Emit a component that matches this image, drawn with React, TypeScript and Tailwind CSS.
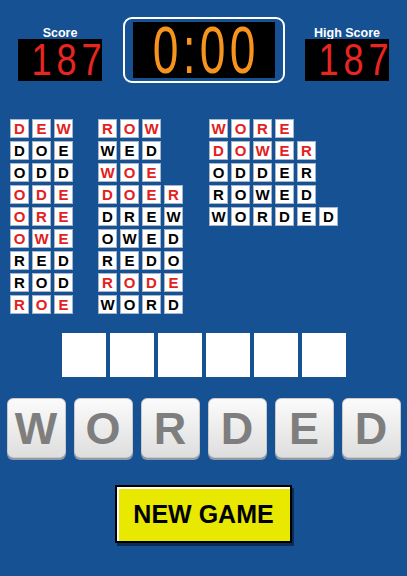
import React from 'react';

const font = { fontFamily: '"Liberation Sans", Arial, sans-serif' };

type Word = { text: string; red: boolean };

const col1: Word[] = [
  { text: 'DEW', red: true },
  { text: 'DOE', red: false },
  { text: 'ODD', red: false },
  { text: 'ODE', red: true },
  { text: 'ORE', red: true },
  { text: 'OWE', red: true },
  { text: 'RED', red: false },
  { text: 'ROD', red: false },
  { text: 'ROE', red: true },
];

const col2: Word[] = [
  { text: 'ROW', red: true },
  { text: 'WED', red: false },
  { text: 'WOE', red: true },
  { text: 'DOER', red: true },
  { text: 'DREW', red: false },
  { text: 'OWED', red: false },
  { text: 'REDO', red: false },
  { text: 'RODE', red: true },
  { text: 'WORD', red: false },
];

const col3: Word[] = [
  { text: 'WORE', red: true },
  { text: 'DOWER', red: true },
  { text: 'ODDER', red: false },
  { text: 'ROWED', red: false },
  { text: 'WORDED', red: false },
];

function WordColumn({ words, className }: { words: Word[]; className?: string }) {
  return (
    <div className={`flex flex-col gap-[3px] ${className ?? ''}`}>
      {words.map((w) => (
        <div key={w.text} className="flex gap-[3px]">
          {w.text.split('').map((ch, i) => (
            <div
              key={i}
              className={`w-[19px] h-[19px] bg-white border border-[#a7b6cb] flex items-center justify-center text-[15px] font-bold leading-none ${
                w.red ? 'text-[#e3211c]' : 'text-black'
              }`}
            >
              {ch}
            </div>
          ))}
        </div>
      ))}
    </div>
  );
}

function ScoreBox({ label, value }: { label: string; value: string }) {
  return (
    <div className="flex flex-col items-center w-[84px] pt-[10px]">
      <div className="text-white font-bold text-[12.5px] leading-[12px]">{label}</div>
      <div className="w-[84px] h-[42px] bg-black flex items-center justify-end pr-[2px]">
        <span className="text-[#e8261f] text-[44px] leading-[40px] tracking-[6px] scale-x-[0.82] origin-right inline-block -mr-[6px]">
          {value}
        </span>
      </div>
    </div>
  );
}

export default function App() {
  const slots = [0, 1, 2, 3, 4, 5];
  const keys = ['W', 'O', 'R', 'D', 'E', 'D'];

  return (
    <div className="w-[407px] h-[576px] bg-[#165193] flex flex-col overflow-hidden" style={font}>
      {/* header */}
      <div className="flex justify-between px-[18px] pt-[17px]">
        <ScoreBox label="Score" value="187" />
        <div className="w-[162px] h-[66px] border-2 border-white rounded-[9px] px-[8px] py-[3px]">
          <div className="w-full h-full bg-black flex items-center justify-center">
            <span className="text-[#f7941d] text-[66px] leading-[56px] tracking-[6px] scale-x-[0.7] inline-block ml-[6px]">
              0:00
            </span>
          </div>
        </div>
        <ScoreBox label="High Score" value="187" />
      </div>

      {/* found words */}
      <div className="flex px-[10px] mt-[36px] items-start">
        <WordColumn words={col1} />
        <WordColumn words={col2} className="ml-[25px]" />
        <WordColumn words={col3} className="ml-[26px]" />
      </div>

      {/* answer slots */}
      <div className="flex justify-center gap-[4px] mt-[19px]">
        {slots.map((s) => (
          <div key={s} className="w-[44px] h-[44px] bg-white" />
        ))}
      </div>

      {/* letter keys */}
      <div className="flex justify-center gap-[8px] mt-[21px]">
        {keys.map((k, i) => (
          <div
            key={i}
            className="w-[59px] h-[60px] rounded-[6px] bg-gradient-to-b from-[#fbfbfb] to-[#dedede] border border-[#c9c9c9] shadow-[0_2px_0_#8f9aa6] flex items-center justify-center"
          >
            <span className="text-[#7e7e7e] text-[45px] font-bold leading-none">{k}</span>
          </div>
        ))}
      </div>

      {/* new game */}
      <div className="flex justify-center mt-[27px]">
        <button className="w-[177px] h-[58px] bg-[#e8e800] border-2 border-black shadow-[inset_2px_2px_0_#ffffff,2px_3px_0_#0b2c55] flex items-center justify-center text-black text-[25px] font-bold leading-none">
          NEW GAME
        </button>
      </div>
    </div>
  );
}
